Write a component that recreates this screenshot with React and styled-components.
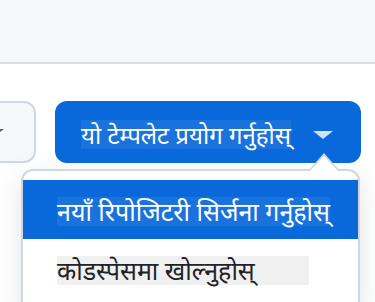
import React from 'react';
import styled, { createGlobalStyle } from 'styled-components';

const GlobalStyle = createGlobalStyle`
  html, body {
    margin: 0;
    padding: 0;
    background: #ffffff;
    overflow: hidden;
  }
  body {
    font-family: "Noto Sans", "Noto Sans Devanagari", "Liberation Sans", sans-serif;
    color: #1f2328;
  }
`;

const Page = styled.div`
  width: 375px;
  height: 302px;
  overflow: hidden;
`;

const Header = styled.div`
  height: 62px;
  background: #f6f8fa;
  border-bottom: 2px solid #d8dee4;
`;

const ButtonRow = styled.div`
  display: flex;
  justify-content: flex-end;
  align-items: flex-start;
  gap: 19px;
  padding: 37px 14px 0 0;
`;

const GhostButton = styled.div`
  flex: none;
  width: 90px;
  height: 58px;
  display: flex;
  align-items: center;
  justify-content: flex-end;
  padding-right: 30px;
  box-sizing: content-box;
  background: #f6f8fa;
  border: 2px solid #d0d7de;
  border-radius: 12px;
`;

const Caret = styled.span`
  display: block;
  flex: none;
  width: 0;
  height: 0;
  border-left: ${p => p.$size}px solid transparent;
  border-right: ${p => p.$size}px solid transparent;
  border-top: ${p => Math.round(p.$size * 0.8)}px solid ${p => p.$color};
`;

const SplitWrap = styled.div`
  position: relative;
  flex: none;
`;

const PrimaryButton = styled.div`
  width: 306px;
  height: 62px;
  box-sizing: border-box;
  display: flex;
  align-items: center;
  padding: 5px 28px 0 26px;
  background: #0969da;
  border-radius: 12px;
  color: #ffffff;
  font-size: 24px;
  white-space: nowrap;
`;

const Label = styled.span`
  flex: 1;
  display: flex;
`;

const Marked = styled.span`
  display: inline-block;
  background: ${p => p.$bg};
  line-height: 29px;
  height: 29px;
  min-width: ${p => p.$width || 0}px;
`;

const Menu = styled.div`
  position: absolute;
  top: calc(100% + 6px);
  right: 1px;
  width: 339px;
  box-sizing: border-box;
  padding: 9px 0 14px;
  background: #ffffff;
  border: 2px solid #d0d7de;
  border-radius: 12px;
  box-shadow: 0 8px 24px rgba(140, 149, 159, 0.25);

  &::before, &::after {
    content: "";
    position: absolute;
    right: 20px;
    width: 0;
    height: 0;
    border-left: 14px solid transparent;
    border-right: 14px solid transparent;
  }
  &::before {
    top: -18px;
    border-bottom: 16px solid #d0d7de;
  }
  &::after {
    top: -15px;
    border-bottom: 15px solid #ffffff;
  }
`;

const MenuItem = styled.div`
  height: 59px;
  display: flex;
  align-items: center;
  padding: 4px 0 0 34px;
  box-sizing: border-box;
  font-size: 25px;
  white-space: nowrap;
  background: ${p => (p.$active ? '#0969da' : 'transparent')};
  color: ${p => (p.$active ? '#ffffff' : '#1f2328')};
`;

export default function App() {
  return (
    <Page>
      <GlobalStyle />
      <Header />
      <ButtonRow>
        <GhostButton>
          <Caret $size={8} $color="#57606a" />
        </GhostButton>
        <SplitWrap>
          <PrimaryButton>
            <Label>
              <Marked $bg="#1a72dc">यो टेम्पलेट प्रयोग गर्नुहोस्</Marked>
            </Label>
            <Caret $size={10} $color="rgba(255,255,255,0.8)" />
          </PrimaryButton>
          <Menu>
            <MenuItem $active>
              <Marked $bg="#1a72dc">नयाँ रिपोजिटरी सिर्जना गर्नुहोस्</Marked>
            </MenuItem>
            <MenuItem>
              <Marked $bg="#f0f0f0" $width={252}>कोडस्पेसमा खोल्नुहोस्</Marked>
            </MenuItem>
          </Menu>
        </SplitWrap>
      </ButtonRow>
    </Page>
  );
}
